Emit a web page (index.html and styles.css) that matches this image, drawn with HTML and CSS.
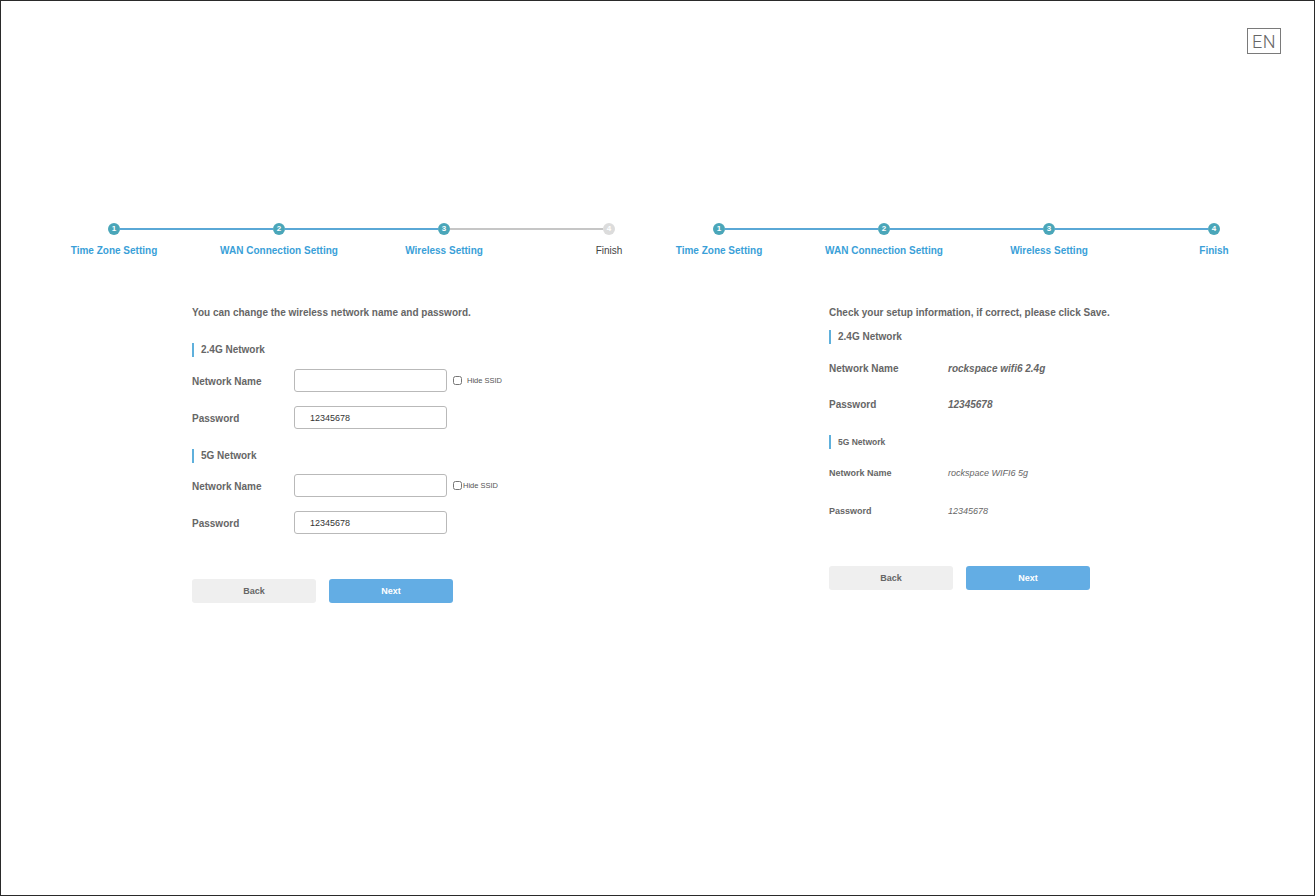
FILE: index.html
```html
<!DOCTYPE html>
<html lang="en">
<head>
    <meta charset="UTF-8">
    <meta name="viewport" content="width=device-width, initial-scale=1.0">
    <title>Quick Setup</title>
    <link rel="stylesheet" href="styles.css">
</head>
<body>
    <!-- Language switch -->
    <div class="top-bar">
        <div class="lang">EN</div>
    </div>

    <div class="main">
        <!-- Step 3: wireless setting -->
        <div class="panel panel-left">
            <div class="stepper">
                <div class="step done"><span class="dot">1</span><span class="step-label">Time Zone Setting</span></div>
                <div class="bar done"></div>
                <div class="step done"><span class="dot">2</span><span class="step-label">WAN Connection Setting</span></div>
                <div class="bar done"></div>
                <div class="step done"><span class="dot">3</span><span class="step-label">Wireless Setting</span></div>
                <div class="bar"></div>
                <div class="step"><span class="dot">4</span><span class="step-label">Finish</span></div>
            </div>

            <div class="form">
                <p class="intro">You can change the wireless network name and password.</p>

                <h3 class="section-title">2.4G Network</h3>
                <div class="field first">
                    <label>Network Name</label>
                    <input type="text" value="">
                    <span class="hide-ssid"><input type="checkbox"> Hide SSID</span>
                </div>
                <div class="field">
                    <label>Password</label>
                    <input type="text" value="12345678">
                </div>

                <h3 class="section-title second">5G Network</h3>
                <div class="field first-5g">
                    <label>Network Name</label>
                    <input type="text" value="">
                    <span class="hide-ssid tight"><input type="checkbox">Hide SSID</span>
                </div>
                <div class="field">
                    <label>Password</label>
                    <input type="text" value="12345678">
                </div>

                <div class="buttons">
                    <button class="btn btn-back">Back</button>
                    <button class="btn btn-next">Next</button>
                </div>
            </div>
        </div>

        <!-- Step 4: summary -->
        <div class="panel panel-right">
            <div class="stepper">
                <div class="step done"><span class="dot">1</span><span class="step-label">Time Zone Setting</span></div>
                <div class="bar done"></div>
                <div class="step done"><span class="dot">2</span><span class="step-label">WAN Connection Setting</span></div>
                <div class="bar done"></div>
                <div class="step done"><span class="dot">3</span><span class="step-label">Wireless Setting</span></div>
                <div class="bar done"></div>
                <div class="step done"><span class="dot">4</span><span class="step-label">Finish</span></div>
            </div>

            <div class="summary">
                <p class="intro">Check your setup information, if correct, please click Save.</p>

                <h3 class="section-title">2.4G Network</h3>
                <div class="info-row row-1">
                    <span class="info-label">Network Name</span>
                    <span class="info-value">rockspace wifi6 2.4g</span>
                </div>
                <div class="info-row row-2">
                    <span class="info-label">Password</span>
                    <span class="info-value">12345678</span>
                </div>

                <h3 class="section-title small">5G Network</h3>
                <div class="info-row small row-3">
                    <span class="info-label">Network Name</span>
                    <span class="info-value">rockspace WIFI6 5g</span>
                </div>
                <div class="info-row small row-4">
                    <span class="info-label">Password</span>
                    <span class="info-value">12345678</span>
                </div>

                <div class="buttons">
                    <button class="btn btn-back">Back</button>
                    <button class="btn btn-next">Next</button>
                </div>
            </div>
        </div>
    </div>
</body>
</html>
```

FILE: styles.css
```css
/* Reset and page frame */
* {
    margin: 0;
    padding: 0;
    box-sizing: border-box;
}

body {
    font-family: "Liberation Sans", Arial, sans-serif;
    color: #666;
    background-color: #fff;
    border: 1px solid #2a2a2a;
    height: 896px;
    overflow: hidden;
}

/* Language switch */
.top-bar {
    display: flex;
    justify-content: flex-end;
    padding: 27px 33px 0 0;
}

.lang {
    width: 34px;
    height: 26px;
    border: 1px solid #7a7a7a;
    display: flex;
    align-items: center;
    justify-content: center;
    font-family: Roboto, "DejaVu Sans", sans-serif;
    font-weight: 300;
    font-size: 18px;
    color: #666;
    letter-spacing: 0.5px;
}

/* Two panels */
.main {
    display: flex;
    margin-top: 169px;
}

.panel-left {
    width: 712px;
    padding-left: 107px;
}

.panel-right {
    flex: 1;
}

/* Stepper */
.stepper {
    display: flex;
    align-items: flex-start;
}

.step {
    width: 12px;
    display: flex;
    flex-direction: column;
    align-items: center;
}

.dot {
    width: 12px;
    height: 12px;
    border-radius: 50%;
    background-color: #dcdcdc;
    color: #fff;
    font-size: 8px;
    font-weight: bold;
    line-height: 12px;
    text-align: center;
}

.step.done .dot {
    background-color: #4aa6b9;
}

.step-label {
    margin-top: 10px;
    white-space: nowrap;
    font-size: 10px;
    line-height: 12px;
    color: #444;
}

.step.done .step-label {
    color: #3a9fd8;
    font-weight: bold;
}

.bar {
    width: 153px;
    height: 2px;
    margin-top: 5px;
    background-color: #c6c6c6;
}

.bar.done {
    background-color: #5aa8d6;
}

/* Shared text */
.intro {
    font-size: 10px;
    line-height: 12px;
    font-weight: bold;
    color: #666;
}

.section-title {
    font-size: 10px;
    line-height: 14px;
    font-weight: bold;
    color: #666;
    border-left: 2px solid #5fb0dc;
    padding-left: 7px;
}

/* Wireless form */
.form {
    margin-left: 84px;
    margin-top: 50px;
}

.form .section-title {
    margin-top: 24px;
}

.form .section-title.second {
    margin-top: 20px;
}

.field {
    display: flex;
    align-items: center;
    height: 23px;
    margin-top: 14px;
}

.field.first {
    margin-top: 12px;
}

.field.first-5g {
    margin-top: 11px;
}

.field label {
    width: 102px;
    font-size: 10px;
    line-height: 14px;
    padding-top: 2px;
    font-weight: bold;
    color: #666;
}

.field input[type="text"] {
    width: 153px;
    height: 23px;
    border: 1px solid #b9b9b9;
    border-radius: 3px;
    padding-left: 15px;
    font-family: "Liberation Sans", Arial, sans-serif;
    font-size: 9px;
    color: #333;
    outline: none;
}

.hide-ssid {
    display: flex;
    align-items: center;
    margin-left: 6px;
    font-size: 7.5px;
    color: #555;
}

.hide-ssid input {
    width: 9px;
    height: 9px;
    margin-right: 5px;
}

.hide-ssid.tight input {
    margin-right: 1px;
}

/* Summary */
.summary {
    margin-left: 116px;
    margin-top: 50px;
}

.summary .section-title {
    margin-top: 11px;
}

.summary .section-title.small {
    margin-top: 21px;
    font-size: 8.5px;
}

.info-row {
    display: flex;
    align-items: center;
    height: 20px;
    font-size: 10px;
}

.row-1 { margin-top: 14px; }
.row-2 { margin-top: 16px; }
.row-3 { margin-top: 14px; }
.row-4 { margin-top: 18px; }

.info-label {
    width: 119px;
    font-weight: bold;
    color: #666;
}

.info-value {
    font-style: italic;
    font-weight: bold;
    color: #666;
}

.info-row.small {
    font-size: 9px;
}

.info-row.small .info-value {
    font-weight: normal;
}

/* Buttons */
.buttons {
    display: flex;
    gap: 13px;
    margin-top: 45px;
}

.summary .buttons {
    margin-top: 45px;
}

.btn {
    width: 124px;
    height: 24px;
    border: none;
    border-radius: 3px;
    font-family: "Liberation Sans", Arial, sans-serif;
    font-size: 9px;
    font-weight: bold;
    cursor: pointer;
}

.btn-back {
    background-color: #efefef;
    color: #666;
}

.btn-next {
    background-color: #63ade4;
    color: #fff;
}
```
